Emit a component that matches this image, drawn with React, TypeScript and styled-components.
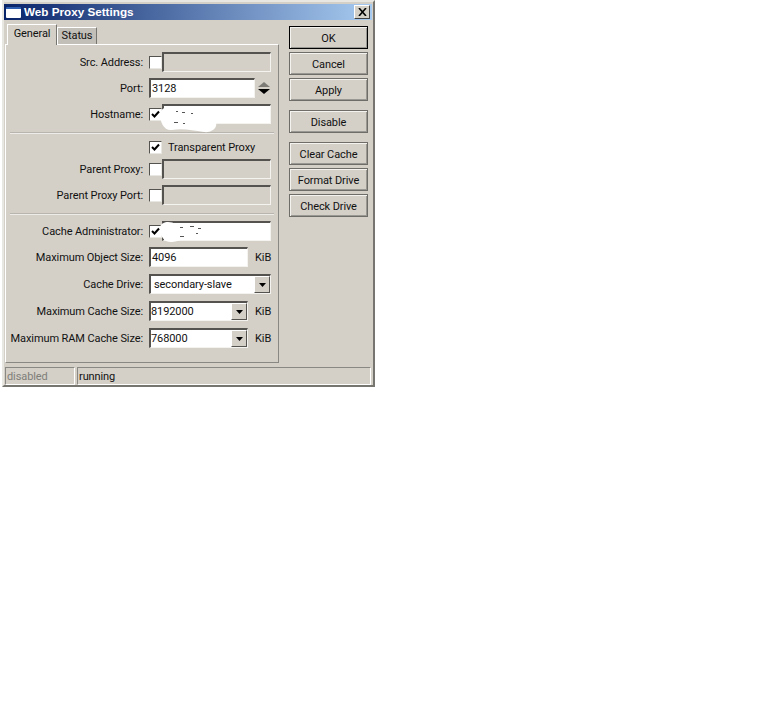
import styled, { createGlobalStyle } from 'styled-components';

const GlobalStyle = createGlobalStyle`
  html, body {
    margin: 0;
    background: #fff;
  }
  #root {
    padding-left: 2px;
  }
`;

type FieldProps = {
  label: string;
  gap?: number;
  children: React.ReactNode;
};

function Field({ label, gap, children }: FieldProps) {
  return (
    <Row $gap={gap}>
      <Label>{label}</Label>
      {children}
    </Row>
  );
}

function Check({ checked }: { checked?: boolean }) {
  return (
    <CheckBox>
      {checked && (
        <svg width='9' height='9' viewBox='0 0 9 9'>
          <path d='M1 4 L3.5 6.5 L8 1.5' fill='none' stroke='#000' strokeWidth='2' />
        </svg>
      )}
    </CheckBox>
  );
}

function Arrow() {
  return (
    <svg width='7' height='4' viewBox='0 0 7 4'>
      <path d='M0 0 H7 L3.5 4 Z' fill='#000' />
    </svg>
  );
}

function Combo({ value, width, pad }: { value: string; width: number; pad: number }) {
  return (
    <Input $width={width} $pad={pad}>
      {value}
      <DropButton>
        <Arrow />
      </DropButton>
    </Input>
  );
}

// the white scribbles somebody painted over the private values
function HostnameScribble() {
  return (
    <Scribble width='64' height='30' viewBox='0 0 64 30'>
      <path
        d='M0 10 C1 4 8 1 12 3 C18 5 24 9 34 10 C44 11 54 12 56 18 C58 25 50 29 44 28 C32 26 22 24 12 26 C4 27 0 18 0 10 Z'
        fill='#fff'
      />
      <path d='M16 7h2v1h-2zM22 8h3v1h-3zM31 9h2v1h-2zM14 18h4v1h-4zM23 19h2v1h-2z' fill='#555' />
    </Scribble>
  );
}

function CacheScribble() {
  return (
    <Scribble width='58' height='24' viewBox='0 0 58 24'>
      <path
        d='M0 6 C2 0 10 0 16 3 C24 5 42 3 50 7 C55 10 50 17 42 16 C30 15 22 20 12 21 C4 22 -1 14 0 6 Z'
        fill='#fff'
      />
      <path d='M20 6h3v1h-3zM30 5h4v1h-4zM38 7h3v1h-3zM20 15h4v1h-4zM36 12h2v1h-2z' fill='#555' />
    </Scribble>
  );
}

export default function App() {
  return (
    <>
      <GlobalStyle />
      <Window>
        <TitleBar>
          <TitleIcon />
          <TitleText>Web Proxy Settings</TitleText>
          <CloseButton>
            <svg width='9' height='8' viewBox='0 0 9 8'>
              <path d='M1 0 L8 8 M8 0 L1 8' stroke='#000' strokeWidth='1.6' />
            </svg>
          </CloseButton>
        </TitleBar>

        <Body>
          <TabColumn>
            <Tabs>
              <Tab $active>General</Tab>
              <Tab>Status</Tab>
            </Tabs>
            <Panel>
              <Field label='Src. Address:' gap={0}>
                <Check />
                <Input $width={109} $disabled />
              </Field>
              <Field label='Port:'>
                <Input $width={106} $pad={1}>3128</Input>
                <Spinner width='12' height='12' viewBox='0 0 12 12'>
                  <path d='M6 0 L12 5 H0 Z' fill='#7d7b76' />
                  <path d='M0 7 H12 L6 12 Z' fill='#000' />
                </Spinner>
              </Field>
              <Field label='Hostname:'>
                <Check checked />
                <Input $width={109}>
                  <HostnameScribble />
                </Input>
              </Field>

              <Divider />

              <Row $gap={3}>
                <Label />
                <Check checked />
                <CheckLabel>Transparent Proxy</CheckLabel>
              </Row>
              <Field label='Parent Proxy:' gap={2}>
                <Check />
                <Input $width={109} $disabled />
              </Field>
              <Field label='Parent Proxy Port:'>
                <Check />
                <Input $width={109} $disabled />
              </Field>

              <Divider />

              <Field label='Cache Administrator:'>
                <Check checked />
                <Input $width={109}>
                  <CacheScribble />
                </Input>
              </Field>
              <Field label='Maximum Object Size:'>
                <Input $width={99} $pad={1}>4096</Input>
                <Unit>KiB</Unit>
              </Field>
              <Field label='Cache Drive:' gap={7}>
                <Combo value='secondary-slave' width={122} pad={3} />
              </Field>
              <Field label='Maximum Cache Size:' gap={7}>
                <Combo value='8192000' width={99} pad={0} />
                <Unit>KiB</Unit>
              </Field>
              <Field label='Maximum RAM Cache Size:' gap={7}>
                <Combo value='768000' width={99} pad={0} />
                <Unit>KiB</Unit>
              </Field>
            </Panel>
          </TabColumn>

          <Buttons>
            <Button $default>OK</Button>
            <Button>Cancel</Button>
            <Button>Apply</Button>
            <Button $section>Disable</Button>
            <Button $section>Clear Cache</Button>
            <Button>Format Drive</Button>
            <Button>Check Drive</Button>
          </Buttons>
        </Body>

        <StatusBar>
          <StatusCell $width={70} $muted>disabled</StatusCell>
          <StatusCell $width={294}>running</StatusCell>
        </StatusBar>
      </Window>
    </>
  );
}

const Window = styled.div`
  box-sizing: border-box;
  width: 373px;
  height: 387px;
  padding: 2px 1px 0 0;
  background: #d4d0c8;
  border: 2px solid;
  border-color: #e9e7e2 #77756f #77756f #e9e7e2;
  font-family: Roboto, 'Liberation Sans', Arial, sans-serif;
  font-size: 11px;
  letter-spacing: -0.1px;
  color: #111;
`;

const TitleBar = styled.div`
  display: flex;
  align-items: center;
  height: 16px;
  padding: 0 2px;
  background: linear-gradient(90deg, #0a246a, #a6caf0);
`;

const TitleIcon = styled.div`
  box-sizing: border-box;
  width: 15px;
  height: 11px;
  background: #fff;
  border-top: 2px solid #2f5fb0;
  border-radius: 1px;
`;

const TitleText = styled.div`
  flex: 1;
  margin-left: 3px;
  padding-bottom: 1px;
  font-family: 'Liberation Sans', Arial, sans-serif;
  font-size: 11.7px;
  font-weight: 700;
  letter-spacing: 0;
  color: #fff;
`;

const CloseButton = styled.div`
  box-sizing: border-box;
  display: flex;
  align-items: center;
  justify-content: center;
  width: 16px;
  height: 14px;
  background: #d4d0c8;
  border: 1px solid;
  border-color: #fff #404040 #404040 #fff;
`;

const Body = styled.div`
  display: flex;
  height: 347px;
  padding-left: 1px;
`;

const TabColumn = styled.div`
  display: flex;
  flex-direction: column;
  width: 274px;
  padding-top: 4px;
`;

const Tabs = styled.div`
  display: flex;
  align-items: flex-end;
  height: 20px;
  padding-left: 2px;
`;

const Tab = styled.div<{ $active?: boolean }>`
  box-sizing: border-box;
  position: relative;
  display: flex;
  align-items: center;
  justify-content: center;
  width: ${(p) => (p.$active ? 50 : 40)}px;
  height: ${(p) => (p.$active ? 21 : 17)}px;
  margin-bottom: ${(p) => (p.$active ? -1 : 0)}px;
  padding-bottom: ${(p) => (p.$active ? 4 : 1)}px;
  background: ${(p) => (p.$active ? '#d4d0c8' : '#c2bfb8')};
  border: 1px solid;
  border-color: #fff #77756f transparent #fff;
  border-bottom: 0;
  z-index: ${(p) => (p.$active ? 1 : 0)};
`;

const Panel = styled.div`
  box-sizing: border-box;
  display: flex;
  flex-direction: column;
  height: 319px;
  padding-top: 7px;
  border: 1px solid;
  border-color: #fff #8a8882 #8a8882 #fff;
`;

const Row = styled.div<{ $gap?: number }>`
  display: flex;
  align-items: center;
  height: 20px;
  margin-top: ${(p) => p.$gap ?? 6}px;
`;

const Label = styled.div`
  flex: none;
  width: 137px;
  margin-right: 6px;
  text-align: right;
  white-space: nowrap;
`;

const CheckBox = styled.div`
  box-sizing: border-box;
  display: flex;
  align-items: center;
  justify-content: center;
  flex: none;
  width: 13px;
  height: 13px;
  background: #fff;
  border: 1px solid;
  border-color: #55534f #e9e7e2 #e9e7e2 #55534f;
`;

const CheckLabel = styled.div`
  margin-left: 6px;
`;

const Input = styled.div<{ $width: number; $disabled?: boolean; $pad?: number }>`
  box-sizing: border-box;
  position: relative;
  display: flex;
  align-items: center;
  flex: none;
  width: ${(p) => p.$width}px;
  height: 20px;
  padding-left: ${(p) => p.$pad ?? 0}px;
  background: ${(p) => (p.$disabled ? '#d4d0c8' : '#fff')};
  border: 2px solid;
  border-color: #55534f #f4f3f0 #f4f3f0 #55534f;
  border-right-width: 1px;
  border-bottom-width: 1px;
  white-space: nowrap;
`;

const DropButton = styled.div`
  box-sizing: border-box;
  position: absolute;
  top: 0;
  right: 0;
  display: flex;
  align-items: center;
  justify-content: center;
  width: 16px;
  height: 17px;
  background: #d4d0c8;
  border: 1px solid;
  border-color: #fff #55534f #55534f #fff;
`;

const Scribble = styled.svg`
  position: absolute;
  top: -2px;
  left: -4px;
`;

const Spinner = styled.svg`
  margin-left: 3px;
`;

const Unit = styled.div`
  margin-left: 7px;
`;

const Divider = styled.div`
  height: 1px;
  margin: 8px 4px 0 4px;
  background: #b8b5ae;
  border-bottom: 1px solid #eeece8;
`;

const Buttons = styled.div`
  display: flex;
  flex-direction: column;
  gap: 3px;
  width: 79px;
  margin: 6px 0 0 10px;
`;

const Button = styled.div<{ $default?: boolean; $section?: boolean }>`
  box-sizing: border-box;
  display: flex;
  align-items: center;
  justify-content: center;
  height: 23px;
  margin-top: ${(p) => (p.$section ? 6 : 0)}px;
  padding-top: 1px;
  background: #d4d0c8;
  border: 1px solid ${(p) => (p.$default ? '#000' : '#6f6d68')};
  box-shadow: inset 1px 1px #f4f3f0, inset -1px -1px #9a9892;
  white-space: nowrap;
`;

const StatusBar = styled.div`
  display: flex;
  gap: 2px;
  height: 18px;
  padding-left: 1px;
`;

const StatusCell = styled.div<{ $width: number; $muted?: boolean }>`
  box-sizing: border-box;
  display: flex;
  align-items: center;
  width: ${(p) => p.$width}px;
  padding-left: 1px;
  color: ${(p) => (p.$muted ? '#807e79' : '#111')};
  border: 1px solid;
  border-color: #8a8882 #fff #fff #8a8882;
`;
